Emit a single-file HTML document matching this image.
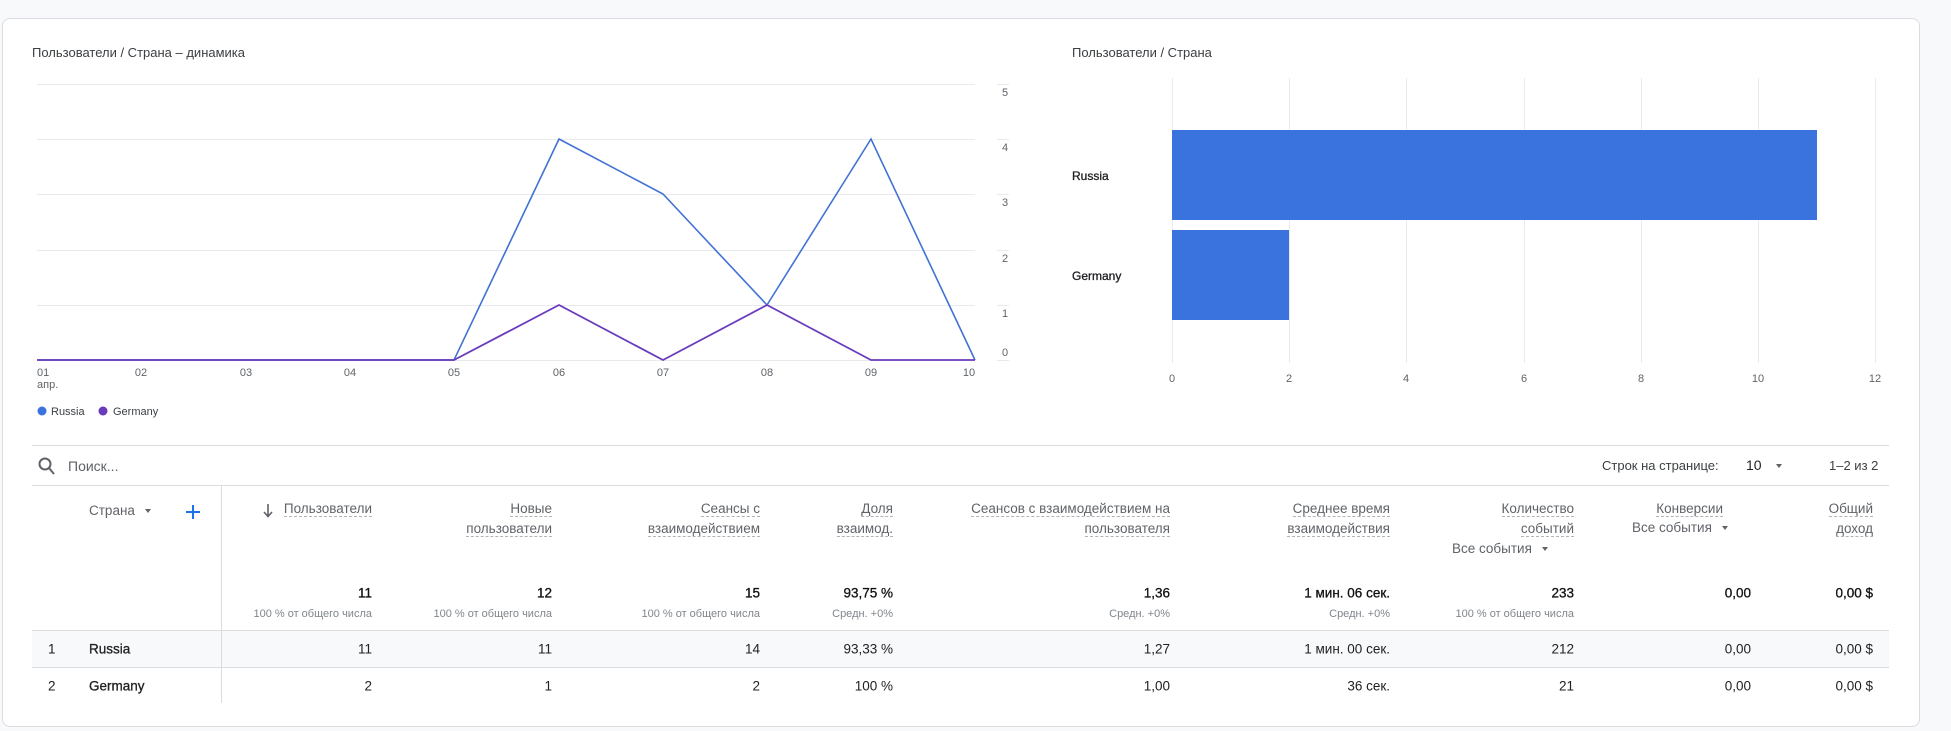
<!DOCTYPE html>
<html><head><meta charset="utf-8"><style>
*{margin:0;padding:0;box-sizing:border-box}
body{width:1951px;height:731px;background:#f8f9fa;font-family:"Liberation Sans",Arial,sans-serif;position:relative;overflow:hidden;color:#202124}
.card{position:absolute;left:2px;top:18px;width:1918px;height:709px;background:#fff;border:1px solid #dadce0;border-radius:8px}
.a{position:absolute;white-space:nowrap}
.t{font-size:13px;color:#3c4043}
.h{font-size:13.5px;color:#5f6368;text-align:right;line-height:20px}
.h span{border-bottom:1px dashed #b0b4b8}
.r{text-align:right}
.tot{font-size:13.5px;color:#111;transform:translateY(-50%);-webkit-text-stroke:0.3px #111}
.sub{font-size:11px;color:#80868b;transform:translateY(-50%)}
.cell{font-size:13.5px;color:#202124;transform:translateY(-50%)}
.tri{display:inline-block;width:0;height:0;border-left:3.5px solid transparent;border-right:3.5px solid transparent;border-top:4px solid #5f6368;vertical-align:middle;margin-left:10px}
</style></head><body>
<div class="card"></div>
<div class="a t" style="left:32px;top:45px">Пользователи / Страна – динамика</div>
<div class="a t" style="left:1072px;top:45px">Пользователи / Страна</div>
<svg class="a" style="left:0;top:0" width="1951" height="731">
<g stroke="#e8eaed" stroke-width="1">
<line x1="37" y1="84.5" x2="975" y2="84.5"/><line x1="37" y1="139.5" x2="975" y2="139.5"/><line x1="37" y1="194.5" x2="975" y2="194.5"/><line x1="37" y1="250.5" x2="975" y2="250.5"/><line x1="37" y1="305.5" x2="975" y2="305.5"/><line x1="37" y1="360.5" x2="975" y2="360.5"/>
<line x1="997" y1="84.5" x2="1009" y2="84.5"/><line x1="997" y1="139.5" x2="1009" y2="139.5"/><line x1="997" y1="194.5" x2="1009" y2="194.5"/><line x1="997" y1="250.5" x2="1009" y2="250.5"/><line x1="997" y1="305.5" x2="1009" y2="305.5"/><line x1="997" y1="360.5" x2="1009" y2="360.5"/>
<line x1="1172.5" y1="78" x2="1172.5" y2="363"/><line x1="1289.5" y1="78" x2="1289.5" y2="363"/><line x1="1406.5" y1="78" x2="1406.5" y2="363"/><line x1="1524.5" y1="78" x2="1524.5" y2="363"/><line x1="1641.5" y1="78" x2="1641.5" y2="363"/><line x1="1758.5" y1="78" x2="1758.5" y2="363"/><line x1="1875.5" y1="78" x2="1875.5" y2="363"/>
</g>
<polyline fill="none" stroke="#4172d4" stroke-width="1.6" points="37,360 454,360 559,139 663,194 767,305 871,139 975,360"/>
<polyline fill="none" stroke="#6a3bbd" stroke-width="1.8" points="37,360 454,360 559,305 663,360 767,305 871,360 975,360"/>
<rect x="1172" y="130" width="645" height="90" fill="#3a72de"/>
<rect x="1172" y="230" width="117" height="90" fill="#3a72de"/>
<g font-family="Liberation Sans,Arial,sans-serif" font-size="11" fill="#5f6368">
<text x="1002" y="96">5</text><text x="1002" y="151">4</text><text x="1002" y="206">3</text><text x="1002" y="262">2</text><text x="1002" y="317">1</text><text x="1002" y="356">0</text>
<text x="37" y="376">01</text><text x="37" y="388">апр.</text>
<text x="141" y="376" text-anchor="middle">02</text><text x="246" y="376" text-anchor="middle">03</text><text x="350" y="376" text-anchor="middle">04</text><text x="454" y="376" text-anchor="middle">05</text><text x="559" y="376" text-anchor="middle">06</text><text x="663" y="376" text-anchor="middle">07</text><text x="767" y="376" text-anchor="middle">08</text><text x="871" y="376" text-anchor="middle">09</text><text x="969" y="376" text-anchor="middle">10</text>
<text x="1172" y="382" text-anchor="middle">0</text><text x="1289" y="382" text-anchor="middle">2</text><text x="1406" y="382" text-anchor="middle">4</text><text x="1524" y="382" text-anchor="middle">6</text><text x="1641" y="382" text-anchor="middle">8</text><text x="1758" y="382" text-anchor="middle">10</text><text x="1875" y="382" text-anchor="middle">12</text>
</g>
<g font-family="Liberation Sans,Arial,sans-serif" font-size="12" fill="#202124" stroke="#202124" stroke-width="0.3">
<text x="1072" y="180">Russia</text><text x="1072" y="280">Germany</text>
</g>
<circle cx="42" cy="411" r="4.5" fill="#3a72de"/><circle cx="103" cy="411" r="4.5" fill="#6a3bbd"/>
<text x="51" y="415" font-family="Liberation Sans,Arial,sans-serif" font-size="11" fill="#3c4043">Russia</text>
<text x="113" y="415" font-family="Liberation Sans,Arial,sans-serif" font-size="11" fill="#3c4043">Germany</text>
<line x1="32" y1="445.5" x2="1889" y2="445.5" stroke="#dadce0"/>
<line x1="32" y1="485.5" x2="1889" y2="485.5" stroke="#dadce0"/>
<rect x="32" y="630" width="1857" height="37" fill="#f8f9fa"/>
<line x1="32" y1="630.5" x2="1889" y2="630.5" stroke="#dadce0"/>
<line x1="32" y1="667.5" x2="1889" y2="667.5" stroke="#dadce0"/>
<line x1="221.5" y1="486" x2="221.5" y2="703" stroke="#dadce0"/>
<circle cx="45" cy="464" r="5.5" fill="none" stroke="#5f6368" stroke-width="2"/>
<line x1="49" y1="468" x2="54" y2="474" stroke="#5f6368" stroke-width="2"/>
<path d="M193 505v14M186 512h14" stroke="#1a73e8" stroke-width="2"/>
<path d="M268 504v12M264 512l4 4.5 4-4.5" stroke="#5f6368" stroke-width="1.6" fill="none"/>
</svg>
<div class="a" style="left:68px;top:458px;font-size:14px;color:#5f6368">Поиск...</div>
<div class="a" style="left:1602px;top:458px;font-size:13px;color:#3c4043">Строк на странице:</div>
<div class="a" style="left:1746px;top:457px;font-size:14px;color:#202124">10<span class="tri" style="margin-left:14px"></span></div>
<div class="a" style="left:1829px;top:458px;font-size:13px;color:#3c4043">1–2 из 2</div>
<div class="a" style="left:89px;top:503px;font-size:13.5px;color:#5f6368">Страна<span class="tri"></span></div>

<div class="a h" style="right:1579px;top:499px"><span>Пользователи</span></div>
<div class="a h" style="right:1399px;top:499px"><span>Новые</span><br><span>пользователи</span></div>
<div class="a h" style="right:1191px;top:499px"><span>Сеансы с</span><br><span>взаимодействием</span></div>
<div class="a h" style="right:1058px;top:499px"><span>Доля</span><br><span>взаимод.</span></div>
<div class="a h" style="right:781px;top:499px"><span>Сеансов с взаимодействием на</span><br><span>пользователя</span></div>
<div class="a h" style="right:561px;top:499px"><span>Среднее время</span><br><span>взаимодействия</span></div>
<div class="a h" style="right:377px;top:499px"><span>Количество</span><br><span>событий</span></div>
<div class="a" style="left:1452px;top:541px;font-size:13.5px;color:#5f6368">Все события<span class="tri"></span></div>
<div class="a h" style="right:228px;top:499px"><span>Конверсии</span></div>
<div class="a" style="left:1632px;top:520px;font-size:13.5px;color:#5f6368">Все события<span class="tri"></span></div>
<div class="a h" style="right:78px;top:499px"><span>Общий</span><br><span>доход</span></div>

<div class="a tot r" style="right:1579px;top:593px">11</div>
<div class="a tot r" style="right:1399px;top:593px">12</div>
<div class="a tot r" style="right:1191px;top:593px">15</div>
<div class="a tot r" style="right:1058px;top:593px">93,75 %</div>
<div class="a tot r" style="right:781px;top:593px">1,36</div>
<div class="a tot r" style="right:561px;top:593px">1 мин. 06 сек.</div>
<div class="a tot r" style="right:377px;top:593px">233</div>
<div class="a tot r" style="right:200px;top:593px">0,00</div>
<div class="a tot r" style="right:78px;top:593px">0,00 $</div>
<div class="a sub r" style="right:1579px;top:614px">100 % от общего числа</div>
<div class="a sub r" style="right:1399px;top:614px">100 % от общего числа</div>
<div class="a sub r" style="right:1191px;top:614px">100 % от общего числа</div>
<div class="a sub r" style="right:1058px;top:614px">Средн. +0%</div>
<div class="a sub r" style="right:781px;top:614px">Средн. +0%</div>
<div class="a sub r" style="right:561px;top:614px">Средн. +0%</div>
<div class="a sub r" style="right:377px;top:614px">100 % от общего числа</div>

<div class="a cell" style="left:48px;top:649px">1</div>
<div class="a cell" style="left:89px;top:649px;-webkit-text-stroke:0.3px #202124">Russia</div>
<div class="a cell" style="right:1579px;top:649px">11</div>
<div class="a cell" style="right:1399px;top:649px">11</div>
<div class="a cell" style="right:1191px;top:649px">14</div>
<div class="a cell" style="right:1058px;top:649px">93,33 %</div>
<div class="a cell" style="right:781px;top:649px">1,27</div>
<div class="a cell" style="right:561px;top:649px">1 мин. 00 сек.</div>
<div class="a cell" style="right:377px;top:649px">212</div>
<div class="a cell" style="right:200px;top:649px">0,00</div>
<div class="a cell" style="right:78px;top:649px">0,00 $</div>

<div class="a cell" style="left:48px;top:686px">2</div>
<div class="a cell" style="left:89px;top:686px;-webkit-text-stroke:0.3px #202124">Germany</div>
<div class="a cell" style="right:1579px;top:686px">2</div>
<div class="a cell" style="right:1399px;top:686px">1</div>
<div class="a cell" style="right:1191px;top:686px">2</div>
<div class="a cell" style="right:1058px;top:686px">100 %</div>
<div class="a cell" style="right:781px;top:686px">1,00</div>
<div class="a cell" style="right:561px;top:686px">36 сек.</div>
<div class="a cell" style="right:377px;top:686px">21</div>
<div class="a cell" style="right:200px;top:686px">0,00</div>
<div class="a cell" style="right:78px;top:686px">0,00 $</div>
</body></html>
